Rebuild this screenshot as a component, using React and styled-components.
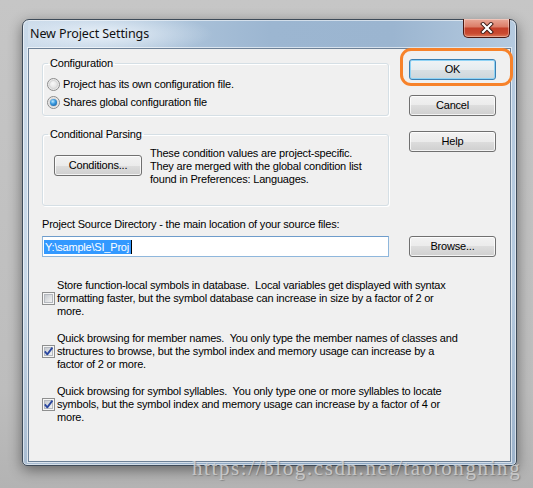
import React from 'react';
import styled, { createGlobalStyle } from 'styled-components';

const Global = createGlobalStyle`
  html, body { margin: 0; padding: 0; background: #c3c3c3; }
  body { width: 533px; height: 488px; overflow: hidden; font-family: "Liberation Sans", Arial, sans-serif; }
  * { box-sizing: border-box; }
`;

const Screen = styled.div`
  position: relative;
  width: 533px;
  height: 488px;
  padding: 19px 0 0 22px;
  background: linear-gradient(#c6c6c6, #bdbdbd 80%, #b3b3b3);
`;

const Window = styled.div`
  width: 495px;
  height: 447px;
  border: 1px solid #3e4b59;
  border-radius: 7px 7px 5px 5px;
  background:
    linear-gradient(to bottom, rgba(255,255,255,0) 0%, rgba(255,255,255,0) 60%, rgba(110,135,165,0.35) 100%),
    linear-gradient(90deg, #c9d9e9 0%, #b3c9de 22%, #9cb6d1 50%, #9bb5d0 75%, #b6cbe0 100%);
  box-shadow: 0 4px 14px rgba(0,0,0,0.45), inset 0 0 0 1px rgba(255,255,255,0.55);
  display: flex;
  flex-direction: column;
  padding: 0 5px 3px 5px;
`;

const TitleBar = styled.div`
  height: 28px;
  display: flex;
  align-items: flex-start;
  background: radial-gradient(ellipse 110px 22px at 75px 14px, rgba(240,246,252,0.85), rgba(240,246,252,0) 100%);
`;

const Title = styled.div`
  font-family: "Noto Sans", "Open Sans", sans-serif;
  font-size: 12.5px;
  letter-spacing: -0.1px;
  line-height: 16px;
  color: #111;
  margin: 6px 0 0 2px;
`;

const CloseBtn = styled.div`
  margin: -1px 1px 0 auto;
  width: 47px;
  height: 19px;
  border: 1px solid #4a1710;
  border-top: none;
  border-radius: 0 0 5px 5px;
  background: linear-gradient(#e9a897 0%, #dc7e69 42%, #c4402a 52%, #c94a30 80%, #dd7a5a 100%);
  box-shadow: inset 0 0 0 1px rgba(255,255,255,0.35);
  display: flex;
  align-items: center;
  justify-content: center;
`;

const Client = styled.div`
  flex: 1;
  background: #f0f0f0;
  border: 1px solid #6d8197;
  box-shadow: 0 0 0 1px rgba(255,255,255,0.6);
  padding: 8px 0 0 13px;
  display: flex;
  flex-direction: column;
  font-size: 11px;
  line-height: 13px;
  letter-spacing: -0.2px;
  color: #000;
`;

const TopRow = styled.div`
  display: flex;
  gap: 20px;
`;

const LeftCol = styled.div`
  width: 347px;
  display: flex;
  flex-direction: column;
  gap: 12px;
`;

const RightCol = styled.div`
  margin-top: 2px;
  display: flex;
  flex-direction: column;
  gap: 15px;
`;

const Group = styled.fieldset`
  margin: 0;
  padding: 0;
  border: 1px solid #d5dfe5;
  border-radius: 3px;
  box-shadow: inset 1px 1px 0 #fff, 1px 1px 0 #fff;
  min-width: 0;
`;

const GroupBody = styled.div`
  padding: ${p => p.$pad};
`;

const Legend = styled.legend`
  margin-left: 5px;
  padding: 0 2px;
  line-height: 13px;
`;

const RadioRow = styled.div`
  height: 18px;
  display: flex;
  align-items: center;
  gap: 3px;
`;

const Radio = styled.span`
  position: relative;
  flex: none;
  width: 13px;
  height: 13px;
  border-radius: 50%;
  border: 1px solid #8b8b8b;
  background: radial-gradient(circle at 50% 50%, #e2e2e2 0, #cfcfcf 45%, #f7f7f7 75%, #ffffff 100%);
  &::after {
    content: '';
    position: absolute;
    left: 2px;
    top: 2px;
    width: 7px;
    height: 7px;
    border-radius: 50%;
    background: ${p => p.$checked
      ? 'radial-gradient(circle at 40% 35%, #bfe9ff 0, #3a9be0 40%, #0c4e92 100%)'
      : 'radial-gradient(circle at 40% 35%, #f8f8f8 0, #dcdcdc 100%)'};
  }
`;

const CondRow = styled.div`
  display: flex;
  align-items: flex-start;
  gap: 8px;
`;

const Btn = styled.div`
  position: relative;
  width: ${p => p.$w || 87}px;
  height: 21px;
  margin-top: ${p => p.$mt || 0}px;
  flex: none;
  border: 1px solid ${p => (p.$default ? '#3c7fb1' : '#707070')};
  border-radius: 3px;
  background: ${p => p.$default
    ? 'linear-gradient(#eef3f6 0%, #e6ecef 50%, #d9e0e4 50%, #cdd6db 100%)'
    : 'linear-gradient(#f2f2f2 0%, #ebebeb 50%, #dddddd 50%, #cfcfcf 100%)'};
  box-shadow: inset 0 0 0 1px ${p => (p.$default ? '#8fd3f5' : 'rgba(255,255,255,0.75)')};
  display: flex;
  align-items: center;
  justify-content: center;
  line-height: 13px;
  color: #000;
`;

const Highlight = styled.div`
  position: absolute;
  left: -10px;
  top: -12px;
  width: 113px;
  height: 38px;
  border: 3px solid #f7822a;
  border-radius: 11px;
  pointer-events: none;
`;

const Para = styled.div`
  white-space: pre;
  line-height: 13px;
  margin-top: ${p => p.$mt || 0}px;
`;

const DirRow = styled.div`
  margin-top: 5px;
  display: flex;
  gap: 20px;
`;

const Input = styled.div`
  width: 347px;
  height: 21px;
  border: 1px solid #8fb7dc;
  border-top-color: #6e9ccb;
  background: #fff;
  padding: 1px 1px;
  display: flex;
  align-items: center;
`;

const Selected = styled.span`
  background: #3399ff;
  color: #fff;
  line-height: 14px;
  padding: 0 2px 0 1px;
`;

const Caret = styled.span`
  width: 1px;
  height: 14px;
  background: #000;
`;

const Options = styled.div`
  margin-top: 22px;
  display: flex;
  flex-direction: column;
  gap: 14px;
`;

const OptionRow = styled.div`
  display: flex;
  align-items: center;
  gap: 2px;
`;

const Watermark = styled.div`
  position: absolute;
  left: 192px;
  top: 456px;
  font-family: "Liberation Serif", "Times New Roman", serif;
  font-size: 21px;
  letter-spacing: 1.6px;
  line-height: 24px;
  color: rgba(214, 214, 214, 0.8);
  text-shadow: 1px 1px 1px rgba(90, 90, 90, 0.45);
  white-space: nowrap;
`;

const CheckBox = ({ checked }) => (
  <svg width="13" height="13" viewBox="0 0 13 13" style={{ flex: 'none' }}>
    <defs>
      <linearGradient id="cbg" x1="0" y1="0" x2="1" y2="1">
        <stop offset="0" stopColor="#c3c7cc" />
        <stop offset="1" stopColor="#f5f5f5" />
      </linearGradient>
    </defs>
    <rect x="0.5" y="0.5" width="12" height="12" fill="#f6f6f6" stroke="#8e8f8f" />
    <rect x="2.5" y="2.5" width="8" height="8" fill="url(#cbg)" stroke="#b5b9bf" />
    {checked && (
      <path d="M2.8 6.4 L5.3 9.4 L10.4 2.6" fill="none" stroke="#2a47a0" strokeWidth="1.8" strokeLinejoin="round" />
    )}
  </svg>
);

const CloseGlyph = () => (
  <svg width="14" height="12" viewBox="0 0 14 12">
    <path d="M3 2 L11 10 M11 2 L3 10" stroke="#3a1a14" strokeWidth="4" strokeLinecap="square" />
    <path d="M3 2 L11 10 M11 2 L3 10" stroke="#ffffff" strokeWidth="2.2" strokeLinecap="square" />
  </svg>
);

export default function App() {
  return (
    <>
      <Global />
      <Screen>
        <Window>
          <TitleBar>
            <Title>New Project Settings</Title>
            <CloseBtn><CloseGlyph /></CloseBtn>
          </TitleBar>
          <Client>
            <TopRow>
              <LeftCol>
                <Group>
                  <Legend>Configuration</Legend>
                  <GroupBody $pad="5px 0 4px 4px">
                    <RadioRow><Radio /><span>Project has its own configuration file.</span></RadioRow>
                    <RadioRow><Radio $checked /><span>Shares global configuration file</span></RadioRow>
                  </GroupBody>
                </Group>
                <Group>
                  <Legend>Conditional Parsing</Legend>
                  <GroupBody $pad="6px 0 19px 11px">
                    <CondRow>
                      <Btn $w={88} $mt={8}>Conditions...</Btn>
                      <Para>{'These condition values are project-specific.\nThey are merged with the global condition list\nfound in Preferences: Languages.'}</Para>
                    </CondRow>
                  </GroupBody>
                </Group>
              </LeftCol>
              <RightCol>
                <Btn $default>OK<Highlight /></Btn>
                <Btn>Cancel</Btn>
                <Btn>Help</Btn>
              </RightCol>
            </TopRow>
            <Para $mt={12}>Project Source Directory - the main location of your source files:</Para>
            <DirRow>
              <Input><Selected>Y:\sample\SI_Proj</Selected><Caret /></Input>
              <Btn>Browse...</Btn>
            </DirRow>
            <Options>
              <OptionRow>
                <CheckBox />
                <Para>{'Store function-local symbols in database.  Local variables get displayed with syntax\nformatting faster, but the symbol database can increase in size by a factor of 2 or\nmore.'}</Para>
              </OptionRow>
              <OptionRow>
                <CheckBox checked />
                <Para>{'Quick browsing for member names.  You only type the member names of classes and\nstructures to browse, but the symbol index and memory usage can increase by a\nfactor of 2 or more.'}</Para>
              </OptionRow>
              <OptionRow>
                <CheckBox checked />
                <Para>{'Quick browsing for symbol syllables.  You only type one or more syllables to locate\nsymbols, but the symbol index and memory usage can increase by a factor of 4 or\nmore.'}</Para>
              </OptionRow>
            </Options>
          </Client>
        </Window>
        <Watermark>https://blog.csdn.net/taotongning</Watermark>
      </Screen>
    </>
  );
}
